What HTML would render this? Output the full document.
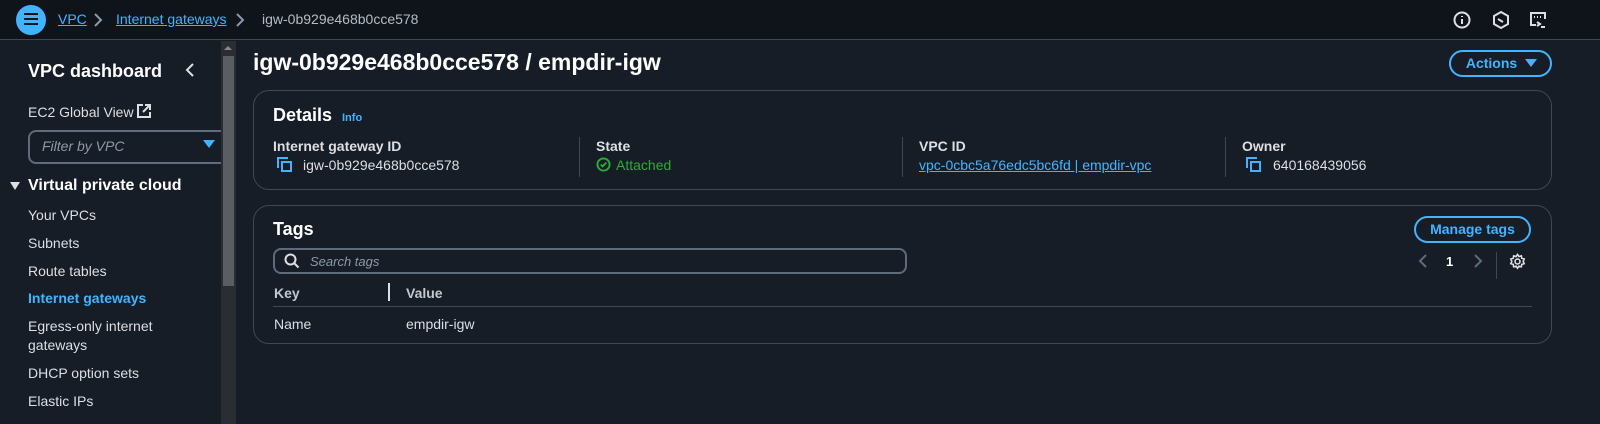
<!DOCTYPE html>
<html><head><meta charset="utf-8"><style>
*{margin:0;padding:0;box-sizing:border-box}
body{width:1600px;height:424px;background:#161d26;font-family:"Liberation Sans",sans-serif;color:#dedee3;font-size:14px;position:relative;overflow:hidden}
.a{position:absolute;white-space:nowrap}
.top{left:0;top:0;width:1600px;height:40px;background:#0f141a;border-bottom:1px solid #424650}
.lnk{color:#42b4ff;text-decoration:underline}
.card{border:1px solid #424650;border-radius:16px}
.lbl{font-weight:bold;font-size:14px;color:#dedee3}
.btn{border:2px solid #42b4ff;border-radius:16px;color:#42b4ff;font-weight:bold;font-size:14px;text-align:center}
.nav{left:28px;font-size:14px;color:#dedee3}
.sep{width:1px;background:#424650}
</style></head><body>
<div class="a top"></div>
<div class="a" style="left:16px;top:5px;width:30px;height:30px;border-radius:50%;background:#42b4ff"></div>
<div class="a" style="left:24px;top:13px;width:14px;height:2px;background:#0f141a;box-shadow:0 5px 0 #0f141a,0 10px 0 #0f141a"></div>
<div class="a lnk" style="left:58px;top:11px">VPC</div>
<svg class="a" style="left:92px;top:12px" width="12" height="16" viewBox="0 0 12 16" fill="none" stroke="#8d99a8" stroke-width="2"><path d="M3 2l6 6-6 6"/></svg>
<div class="a lnk" style="left:116px;top:11px">Internet gateways</div>
<svg class="a" style="left:234px;top:12px" width="12" height="16" viewBox="0 0 12 16" fill="none" stroke="#8d99a8" stroke-width="2"><path d="M3 2l6 6-6 6"/></svg>
<div class="a" style="left:262px;top:11px;color:#b4bcc6">igw-0b929e468b0cce578</div>
<svg class="a" style="left:1452px;top:10px" width="20" height="20" viewBox="0 0 20 20" fill="none" stroke="#dedee3" stroke-width="2"><circle cx="10" cy="10" r="7.5"/><path d="M10 9v5M10 6v1"/></svg>
<svg class="a" style="left:1491px;top:10px" width="20" height="20" viewBox="0 0 20 20" fill="none" stroke="#dedee3" stroke-width="2"><path d="M10 2l7 4v8l-7 4-7-4V6z"/><path d="M7 9l5 3"/></svg>
<svg class="a" style="left:1528px;top:10px" width="20" height="20" viewBox="0 0 20 20" fill="none" stroke="#dedee3" stroke-width="2"><path d="M8 15H3V3h14v6"/><path d="M6 7h1M9 7h1M12 7h1M9 12l3 2-3 2M13 17h4"/></svg>

<!-- sidebar -->
<div class="a" style="left:28px;top:61px;font-size:18px;font-weight:bold;color:#fff">VPC dashboard</div>
<svg class="a" style="left:184px;top:62px" width="12" height="16" viewBox="0 0 12 16" fill="none" stroke="#dedee3" stroke-width="2"><path d="M9 2L3 8l6 6"/></svg>
<div class="a nav" style="top:104px">EC2 Global View</div>
<svg class="a" style="left:137px;top:104px" width="14" height="14" viewBox="0 0 14 14" fill="none" stroke="#dedee3" stroke-width="2"><path d="M6 1H1v12h12V8M8 1h5v5M13 1L6 8"/></svg>
<div class="a" style="left:28px;top:130px;width:200px;height:34px;border:2px solid #5f6b7a;border-radius:8px"></div>
<div class="a" style="left:42px;top:138px;font-style:italic;color:#8d99a8">Filter by VPC</div>
<div class="a" style="left:203px;top:140px;width:0;height:0;border-left:6px solid transparent;border-right:6px solid transparent;border-top:8px solid #42b4ff"></div>
<div class="a" style="left:10px;top:182px;width:0;height:0;border-left:5px solid transparent;border-right:5px solid transparent;border-top:8px solid #dedee3"></div>
<div class="a" style="left:28px;top:177px;font-size:16px;font-weight:bold;color:#fff">Virtual private cloud</div>
<div class="a nav" style="top:207px">Your VPCs</div>
<div class="a nav" style="top:235px">Subnets</div>
<div class="a nav" style="top:263px">Route tables</div>
<div class="a nav" style="top:290px;color:#42b4ff;font-weight:bold">Internet gateways</div>
<div class="a nav" style="top:318px">Egress-only internet</div>
<div class="a nav" style="top:337px">gateways</div>
<div class="a nav" style="top:365px">DHCP option sets</div>
<div class="a nav" style="top:393px">Elastic IPs</div>
<div class="a" style="left:221px;top:41px;width:15px;height:383px;background:#2a2e33"></div>
<div class="a" style="left:223px;top:56px;width:11px;height:230px;background:#5a5d62"></div>
<div class="a" style="left:224px;top:46px;width:0;height:0;border-left:4px solid transparent;border-right:4px solid transparent;border-bottom:4px solid #888"></div>

<!-- main -->
<div class="a" style="left:253px;top:49px;font-size:23px;font-weight:bold;color:#fff">igw-0b929e468b0cce578 / empdir-igw</div>
<div class="a btn" style="left:1449px;top:50px;width:103px;height:27px;line-height:23px;padding-right:18px">Actions</div>
<div class="a" style="left:1525px;top:59px;width:0;height:0;border-left:6px solid transparent;border-right:6px solid transparent;border-top:8px solid #42b4ff"></div>

<div class="a card" style="left:253px;top:90px;width:1299px;height:100px"></div>
<div class="a" style="left:273px;top:105px;font-size:18px;font-weight:bold;color:#fff">Details</div>
<div class="a" style="left:342px;top:112px;font-size:11px;font-weight:bold;color:#42b4ff">Info</div>
<div class="a lbl" style="left:273px;top:138px">Internet gateway ID</div>
<div class="a" style="left:303px;top:157px">igw-0b929e468b0cce578</div>
<svg class="a" style="left:277px;top:157px" width="16" height="16" viewBox="0 0 16 16" fill="none" stroke="#42b4ff" stroke-width="2"><path d="M1 11V1h10"/><rect x="5" y="5" width="9" height="9"/></svg>
<div class="a sep" style="left:579px;top:137px;height:40px"></div>
<div class="a lbl" style="left:596px;top:138px">State</div>
<svg class="a" style="left:596px;top:157px" width="15" height="15" viewBox="0 0 16 16" fill="none" stroke="#29ad32" stroke-width="2"><circle cx="8" cy="8" r="6.5"/><path d="M5 8l2 2 4-4"/></svg>
<div class="a" style="left:616px;top:157px;color:#29ad32">Attached</div>
<div class="a sep" style="left:902px;top:137px;height:40px"></div>
<div class="a lbl" style="left:919px;top:138px">VPC ID</div>
<div class="a lnk" style="left:919px;top:157px">vpc-0cbc5a76edc5bc6fd | empdir-vpc</div>
<div class="a sep" style="left:1225px;top:137px;height:40px"></div>
<div class="a lbl" style="left:1242px;top:138px">Owner</div>
<svg class="a" style="left:1246px;top:157px" width="16" height="16" viewBox="0 0 16 16" fill="none" stroke="#42b4ff" stroke-width="2"><path d="M1 11V1h10"/><rect x="5" y="5" width="9" height="9"/></svg>
<div class="a" style="left:1273px;top:157px">640168439056</div>

<div class="a card" style="left:253px;top:205px;width:1299px;height:139px"></div>
<div class="a" style="left:273px;top:219px;font-size:18px;font-weight:bold;color:#fff">Tags</div>
<div class="a btn" style="left:1414px;top:216px;width:117px;height:27px;line-height:23px">Manage tags</div>
<div class="a" style="left:273px;top:248px;width:634px;height:26px;border:2px solid #5f6b7a;border-radius:8px"></div>
<svg class="a" style="left:284px;top:253px" width="16" height="16" viewBox="0 0 16 16" fill="none" stroke="#dedee3" stroke-width="2"><circle cx="6.5" cy="6.5" r="5"/><path d="M10 10l4.5 4.5"/></svg>
<div class="a" style="left:310px;top:254px;font-style:italic;color:#8d99a8;font-size:13px">Search tags</div>
<svg class="a" style="left:1417px;top:253px" width="12" height="16" viewBox="0 0 12 16" fill="none" stroke="#5f6b7a" stroke-width="2"><path d="M9 2L3 8l6 6"/></svg>
<div class="a" style="left:1446px;top:254px;font-weight:bold;color:#fff;font-size:13px">1</div>
<svg class="a" style="left:1472px;top:253px" width="12" height="16" viewBox="0 0 12 16" fill="none" stroke="#5f6b7a" stroke-width="2"><path d="M3 2l6 6-6 6"/></svg>
<div class="a sep" style="left:1496px;top:252px;height:27px"></div>
<svg class="a" style="left:1509px;top:253px" width="17" height="17" viewBox="0 0 24 24" fill="none" stroke="#dedee3" stroke-width="2.2"><circle cx="12" cy="12" r="3.5"/><path d="M12 2l2 3 3.5-1 .5 3.5 3.5 1-1.5 3.5 1.5 3-3.5 1-.5 3.5-3.5-1-2 3-2-3-3.5 1-.5-3.5-3.5-1L4 12 2.5 8.5 6 7.5 6.5 4 10 5z"/></svg>
<div class="a lbl" style="left:274px;top:285px;color:#c6c6cd">Key</div>
<div class="a" style="left:388px;top:283px;width:2px;height:18px;background:#dedee3"></div>
<div class="a lbl" style="left:406px;top:285px;color:#c6c6cd">Value</div>
<div class="a" style="left:273px;top:306px;width:1259px;height:1px;background:#424650"></div>
<div class="a" style="left:274px;top:316px">Name</div>
<div class="a" style="left:406px;top:316px">empdir-igw</div>
</body></html>
